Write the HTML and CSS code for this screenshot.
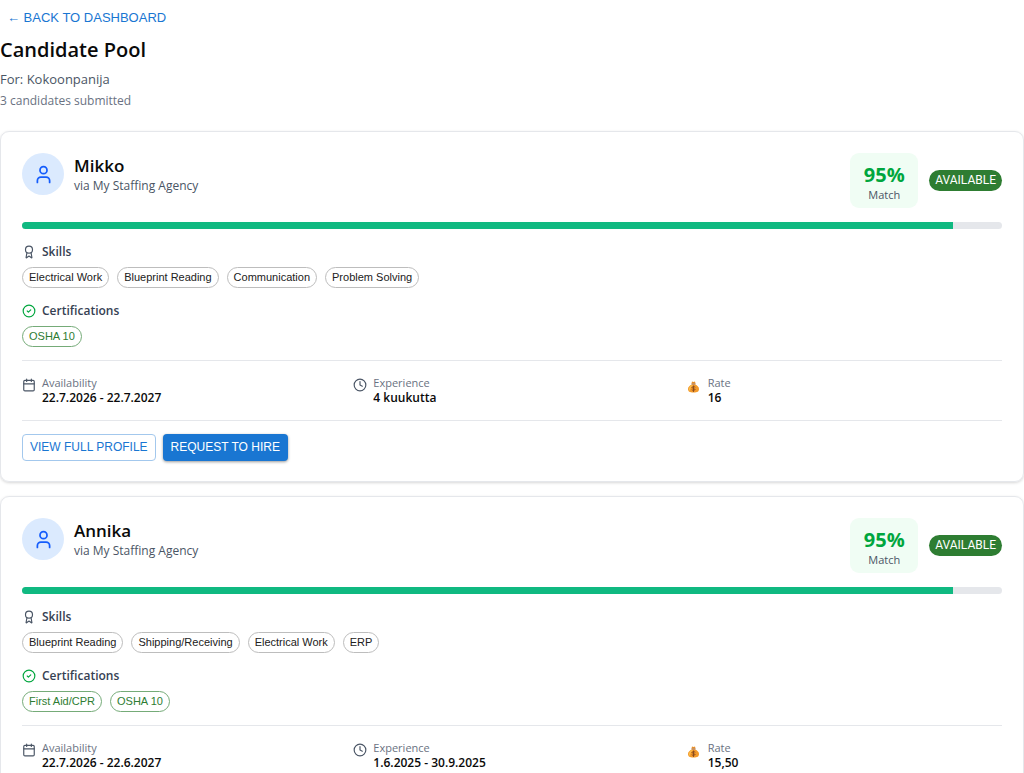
FILE: index.html
```html
<!DOCTYPE html>
<html lang="en">
<head>
    <meta charset="UTF-8">
    <meta name="viewport" content="width=device-width, initial-scale=1">
    <title>Candidate Pool</title>
    <link rel="stylesheet" href="styles.css">
</head>
<body>
    <!-- Shared icons -->
    <svg class="icon-defs" aria-hidden="true">
        <symbol id="icon-user" viewBox="0 0 24 24">
            <path d="M19 21v-2a4 4 0 0 0-4-4H9a4 4 0 0 0-4 4v2"/>
            <circle cx="12" cy="7" r="4"/>
        </symbol>
        <symbol id="icon-award" viewBox="0 0 24 24">
            <path d="m15.477 12.89 1.515 8.526a.5.5 0 0 1-.81.47l-3.58-2.687a1 1 0 0 0-1.197 0l-3.586 2.686a.5.5 0 0 1-.81-.469l1.514-8.526"/>
            <circle cx="12" cy="8" r="6"/>
        </symbol>
        <symbol id="icon-check" viewBox="0 0 24 24">
            <circle cx="12" cy="12" r="10"/>
            <path d="m9 12 2 2 4-4"/>
        </symbol>
        <symbol id="icon-calendar" viewBox="0 0 24 24">
            <path d="M8 2v4M16 2v4M3 10h18"/>
            <rect x="3" y="4" width="18" height="18" rx="2"/>
        </symbol>
        <symbol id="icon-clock" viewBox="0 0 24 24">
            <circle cx="12" cy="12" r="10"/>
            <path d="M12 6v6l4 2"/>
        </symbol>
        <symbol id="icon-money" viewBox="0 0 24 24">
            <path fill="#f39a2b" d="M9 7C4 9 1 12 1 16c0 5 3 7 11 7s11-2 11-7c0-4-3-7-8-9z"/>
            <path fill="#fbc04f" d="M9 8c-4 2-6 5-6 8 0 2 1 3 2 4 0-5 2-9 6-12z"/>
            <path fill="#e8902a" d="M9 1l3 1 3-1 1 4H8z"/>
            <path fill="#a05a24" d="M8 5h8v2H8z"/>
            <path fill="none" stroke="#8a4b1f" stroke-width="2" d="M15 12c-1-1-6-1-6 1s6 2 6 4-5 2-6 1M12 10v11"/>
        </symbol>
    </svg>

    <header class="page-header">
        <a href="#" class="back-link">← BACK TO DASHBOARD</a>
        <h1>Candidate Pool</h1>
        <p class="job">For: Kokoonpanija</p>
        <p class="count">3 candidates submitted</p>
    </header>

    <main class="candidates">
        <article class="card">
            <div class="card-top">
                <div class="avatar"><svg><use href="#icon-user"/></svg></div>
                <div class="person">
                    <h2>Mikko</h2>
                    <p>via My Staffing Agency</p>
                </div>
                <div class="match">
                    <strong>95%</strong>
                    <span>Match</span>
                </div>
                <span class="status">AVAILABLE</span>
            </div>
            <div class="progress"><div class="progress-fill" style="width: 95%"></div></div>

            <h3><svg class="icon"><use href="#icon-award"/></svg>Skills</h3>
            <ul class="chips">
                <li>Electrical Work</li>
                <li>Blueprint Reading</li>
                <li>Communication</li>
                <li>Problem Solving</li>
            </ul>

            <h3><svg class="icon green"><use href="#icon-check"/></svg>Certifications</h3>
            <ul class="chips certs">
                <li>OSHA 10</li>
            </ul>

            <div class="details">
                <div class="detail">
                    <svg class="icon"><use href="#icon-calendar"/></svg>
                    <dl><dt>Availability</dt><dd>22.7.2026 - 22.7.2027</dd></dl>
                </div>
                <div class="detail">
                    <svg class="icon"><use href="#icon-clock"/></svg>
                    <dl><dt>Experience</dt><dd>4 kuukutta</dd></dl>
                </div>
                <div class="detail">
                    <svg class="money"><use href="#icon-money"/></svg>
                    <dl><dt>Rate</dt><dd>16</dd></dl>
                </div>
            </div>

            <div class="actions">
                <button type="button" class="btn btn-outline">VIEW FULL PROFILE</button>
                <button type="button" class="btn btn-primary">REQUEST TO HIRE</button>
            </div>
        </article>

        <article class="card">
            <div class="card-top">
                <div class="avatar"><svg><use href="#icon-user"/></svg></div>
                <div class="person">
                    <h2>Annika</h2>
                    <p>via My Staffing Agency</p>
                </div>
                <div class="match">
                    <strong>95%</strong>
                    <span>Match</span>
                </div>
                <span class="status">AVAILABLE</span>
            </div>
            <div class="progress"><div class="progress-fill" style="width: 95%"></div></div>

            <h3><svg class="icon"><use href="#icon-award"/></svg>Skills</h3>
            <ul class="chips">
                <li>Blueprint Reading</li>
                <li>Shipping/Receiving</li>
                <li>Electrical Work</li>
                <li>ERP</li>
            </ul>

            <h3><svg class="icon green"><use href="#icon-check"/></svg>Certifications</h3>
            <ul class="chips certs">
                <li>First Aid/CPR</li>
                <li>OSHA 10</li>
            </ul>

            <div class="details">
                <div class="detail">
                    <svg class="icon"><use href="#icon-calendar"/></svg>
                    <dl><dt>Availability</dt><dd>22.7.2026 - 22.6.2027</dd></dl>
                </div>
                <div class="detail">
                    <svg class="icon"><use href="#icon-clock"/></svg>
                    <dl><dt>Experience</dt><dd>1.6.2025 - 30.9.2025</dd></dl>
                </div>
                <div class="detail">
                    <svg class="money"><use href="#icon-money"/></svg>
                    <dl><dt>Rate</dt><dd>15,50</dd></dl>
                </div>
            </div>

            <div class="actions">
                <button type="button" class="btn btn-outline">VIEW FULL PROFILE</button>
                <button type="button" class="btn btn-primary">REQUEST TO HIRE</button>
            </div>
        </article>
    </main>
</body>
</html>
```
FILE: styles.css
```css
* {
    box-sizing: border-box;
    margin: 0;
    padding: 0;
}

body {
    background: #fff;
    color: #0a0a0a;
    font-family: "Open Sans", "Noto Sans", sans-serif;
    font-size: 12px;
}

svg {
    display: block;
    flex: none;
    fill: none;
    stroke: currentColor;
    stroke-width: 2;
    stroke-linecap: round;
    stroke-linejoin: round;
}

.icon-defs {
    position: absolute;
    width: 0;
    height: 0;
}

/* Header */
.page-header {
    padding: 7px 0 20px;
}

.back-link {
    display: inline-block;
    padding: 0 7px;
    color: #1976d2;
    font-family: "Liberation Sans", Arial, sans-serif;
    font-size: 13px;
    line-height: 22px;
    text-decoration: none;
}

h1 {
    margin-top: 7px;
    font-size: 20px;
    font-weight: 600;
    line-height: 28px;
}

.job {
    margin-top: 4px;
    color: #4a5565;
    font-size: 13px;
    line-height: 23px;
}

.count {
    color: #6a7282;
    line-height: 20px;
}

/* Cards */
.candidates {
    display: flex;
    flex-direction: column;
    gap: 14px;
}

.card {
    padding: 21px 21px 20px;
    border: 1px solid #e5e7eb;
    border-radius: 9px;
    box-shadow: 0 1px 3px rgba(0, 0, 0, 0.16);
}

.card-top {
    display: flex;
    align-items: flex-start;
    margin-bottom: 14px;
}

.avatar {
    display: flex;
    align-items: center;
    justify-content: center;
    width: 42px;
    height: 42px;
    border-radius: 50%;
    background: #dbeafe;
    color: #155dfc;
}

.avatar svg {
    width: 21px;
    height: 21px;
}

.person {
    flex: 1;
    margin-left: 10px;
}

h2 {
    font-size: 17px;
    font-weight: 600;
    line-height: 25px;
}

.person p {
    color: #4a5565;
    line-height: 16px;
}

.match {
    display: flex;
    flex-direction: column;
    align-items: center;
    width: 68px;
    height: 55px;
    padding-top: 8px;
    border-radius: 9px;
    background: #f0fdf4;
}

.match strong {
    color: #00a63e;
    font-size: 20px;
    font-weight: 700;
    line-height: 28px;
}

.match span {
    color: #4a5565;
    font-size: 11px;
    line-height: 12px;
}

.status {
    align-self: center;
    margin-left: 11px;
    padding: 0 6px;
    border-radius: 11px;
    background: #2e7d32;
    color: #fff;
    font-family: Roboto, Arial, sans-serif;
    line-height: 21px;
}

.progress {
    height: 7px;
    margin-bottom: 14px;
    overflow: hidden;
    border-radius: 4px;
    background: #e5e7eb;
}

.progress-fill {
    height: 100%;
    background: #10b981;
}

/* Skills and certifications */
h3 {
    display: flex;
    align-items: center;
    gap: 6px;
    margin-bottom: 7px;
    color: #364153;
    font-size: 12px;
    font-weight: 600;
    line-height: 17px;
}

.icon {
    width: 14px;
    height: 14px;
    color: #4a5565;
}

.icon.green {
    color: #00a63e;
}

.chips {
    display: flex;
    flex-wrap: wrap;
    gap: 8px;
    margin-bottom: 14px;
    list-style: none;
}

.chips li {
    padding: 0 6px;
    border: 1px solid #bdbdbd;
    border-radius: 11px;
    color: #212121;
    font-family: "Liberation Sans", Arial, sans-serif;
    font-size: 11px;
    line-height: 19px;
}

.chips.certs {
    margin-bottom: 13px;
}

.chips.certs li {
    border-color: #75ab78;
    color: #2e7d32;
}

/* Availability, experience, rate */
.details {
    display: grid;
    grid-template-columns: repeat(3, 1fr);
    gap: 14px;
    padding: 14px 0 15px;
    border-top: 1px solid #e5e7eb;
    border-bottom: 1px solid #e5e7eb;
}

.detail {
    display: flex;
    gap: 6px;
}

.detail .icon {
    margin-top: 3px;
}

.money {
    width: 17px;
    height: 12px;
    margin-top: 6px;
    stroke: none;
}

dt {
    color: #6a7282;
    font-size: 11px;
    line-height: 15px;
}

dd {
    font-weight: 600;
    line-height: 15px;
}

/* Buttons */
.actions {
    display: flex;
    gap: 7px;
    margin-top: 13px;
}

.btn {
    height: 27px;
    padding: 0 8px 2px;
    border: 0;
    border-radius: 4px;
    font-family: "Liberation Sans", Arial, sans-serif;
    font-size: 12px;
    cursor: pointer;
}

.btn-outline {
    padding: 0 7px 2px;
    border: 1px solid #a3c8ed;
    background: #fff;
    color: #1976d2;
}

.btn-primary {
    background: #1976d2;
    box-shadow: 0 1px 3px rgba(0, 0, 0, 0.4);
    color: #fff;
}
```
